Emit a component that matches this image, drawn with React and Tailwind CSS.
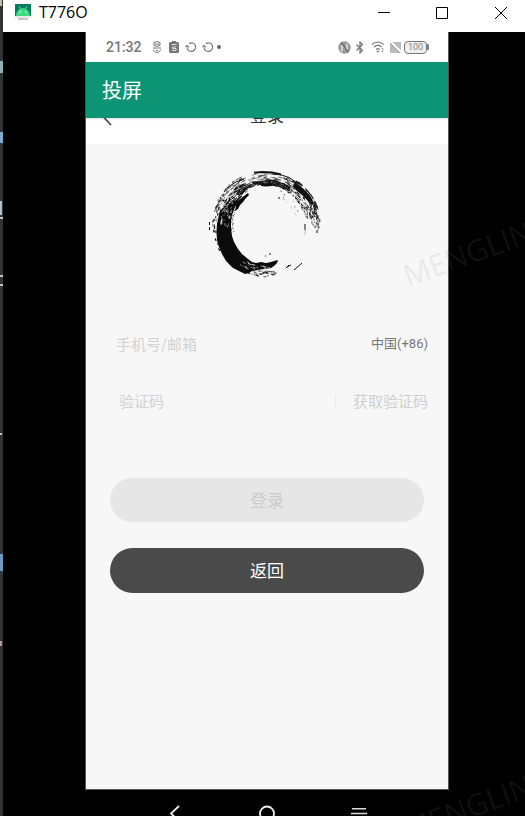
import React from "react";

const CJK = "font-['Noto_Sans_CJK_SC','Noto_Sans',sans-serif]";

function createRandom(seed) {
  let s = seed;
  return () => {
    s = (s * 16807) % 2147483647;
    return s / 2147483647;
  };
}

function arc(r, from, to) {
  const point = (deg) => {
    const a = (deg * Math.PI) / 180;
    return `${(59.5 + r * Math.cos(a)).toFixed(1)} ${(57 + r * Math.sin(a)).toFixed(1)}`;
  };
  return `M${point(from)}A${r.toFixed(1)} ${r.toFixed(1)} 0 0 1 ${point(to)}`;
}

const ink = "#111";
const paper = "#f7f7f7";

// Each band of bristle marks: from and to angle, inner and outer radius,
// number of marks, longest mark in degrees, stroke width, colour.
const bands = [
  [196, 240, 38, 48, 120, 5, 1.1, ink],
  [225, 300, 40, 45, 130, 10, 0.9, ink],
  [210, 300, 45, 52, 95, 7, 0.6, ink],
  [205, 240, 51, 55, 30, 3, 0.7, ink],
  [290, 350, 39, 52, 150, 4, 0.9, ink],
  [300, 340, 47, 54, 50, 8, 1.1, ink],
  [335, 361, 45, 54, 50, 3, 0.8, ink],
  [78, 150, 46, 52, 110, 3, 0.9, ink],
  [150, 215, 49, 54, 70, 2, 1, ink],
  [168, 225, 33, 38, 45, 1.5, 0.8, ink],
  [292, 340, 30, 37, 10, 2, 0.7, ink],
  [78, 122, 41, 49, 36, 4, 0.6, paper],
  [176, 225, 37, 50, 60, 4, 0.7, paper],
];

function buildMarks() {
  const random = createRandom(4217);
  const marks = [];
  bands.forEach(([from, to, inner, outer, count, length, width, color]) => {
    for (let i = 0; i < count; i++) {
      const r = inner + random() * (outer - inner);
      const start = from + random() * (to - from);
      const end = Math.min(to + 3, start + 1 + random() * length);
      marks.push({ d: arc(r, start, end), width: width * (0.5 + random() * 0.7), color });
    }
  });
  return marks;
}

const marks = buildMarks();

function InkCircle() {
  return (
    <svg viewBox="0 0 120 114" className="h-[114px] w-[120px]" fill="none" stroke={ink} role="img" aria-label="logo">
      <path
        fill="#0b0b0b"
        stroke="none"
        d="M13 42l-1.500 7-1.500 7-.5 8 .5 8 2 7 3 7 4 7 7 7 6 3 6 3 4-1 3-2 6-1 7-1 6-1 3-2 3-3 1-3-4 1-3 1-5 1-5-1-5 1-4-1-4-3-6-5-4-5-4-7-2-6-1-8 0-6 1-7 3-8 4-6-3-3-6 5-4 4z"
      />
      <path fill="#0b0b0b" stroke="none" d="M41 25l-4 3-5 4-3 5-1 6 3-2 2-4 3-3 3-4 3-3z" />
      <path fill={ink} stroke="none" d="M87 15l6 3 6 5 5 7 1 4-5-2-5-5-5-4-4-4z" />
      <path strokeWidth="3" d="M54 16.500l5 .5 6-.5" />
      <path strokeWidth="2" d="M47 4.800l8-.8 10 .4 9 2" />
      <path strokeWidth="1" d="M73 6.500l9 3 6 4M17 24l4-5 8-5 8-3M79 100l3-3M87 102l8-7M84 97l-4 2M62 86h2M58 88h1M110 62v3M98 56v6M2.500 54v3M2.500 59v3M71 30h2" />
      <path strokeWidth=".5" stroke="#888" d="M98 62v5M111 53v12" />
      {marks.map((mark, i) => (
        <path key={i} d={mark.d} strokeWidth={mark.width} stroke={mark.color} />
      ))}
    </svg>
  );
}

function AndroidLogo() {
  return (
    <svg viewBox="0 0 16 16" className="h-4 w-4" aria-hidden="true">
      <path fill="#087a62" d="M0 0h16v12H0z" />
      <path fill="#3ddc84" d="M1 12c.3-4 2-6 4-7L3.500 2.500l.8-.4L6 4.500c1.300-.4 2.700-.4 4 0l1.700-2.400.8.4L11 5c2 1 3.700 3 4 7z" />
      <path fill="#fff" d="M4.500 7.500h1.200v1.200H4.500zM10.300 7.500h1.200v1.200h-1.200z" />
      <path fill="#e8e8e8" d="M0 12h16v2H0z" />
      <path fill="#c4c4c4" d="M3 14h10v2H3z" />
    </svg>
  );
}

function TitleBar() {
  return (
    <header className="flex h-8 shrink-0 items-center bg-white pl-3 text-black">
      <div className="pb-2">
        <AndroidLogo />
      </div>
      <h1 className="ml-2 pb-2 font-['Open_Sans',sans-serif] text-base leading-5">T776O</h1>
      <div className="ml-auto flex h-8 items-start pt-[7px]">
        <button type="button" aria-label="Minimize" className="mr-[46px]">
          <svg viewBox="0 0 12 12" className="h-3 w-3" stroke="#000"><path d="M0 5.500h12" /></svg>
        </button>
        <button type="button" aria-label="Maximize" className="mr-[47px]">
          <svg viewBox="0 0 12 12" className="h-3 w-3" stroke="#000" fill="none"><path d="M.5.5h11v11H.5z" /></svg>
        </button>
        <button type="button" aria-label="Close" className="mr-[18px]">
          <svg viewBox="0 0 12 12" className="h-3 w-3" stroke="#000"><path d="M0 0l12 12M12 0L0 12" /></svg>
        </button>
      </div>
    </header>
  );
}

function StatusBar() {
  return (
    <div className="flex h-[30px] shrink-0 items-center bg-white pl-5 pr-[19px] text-[#777]">
      <span className="font-[Roboto,sans-serif] text-sm font-medium leading-5">21:32</span>
      <div className="ml-[9px] flex items-center gap-[5px]" aria-hidden="true">
        <svg viewBox="0 0 12 12" className="h-3 w-3" fill="none" stroke="currentColor">
          <path d="M3 1.500Q6-.5 9 1.500v3Q6 6 3 4.500zM2 7h8M2.500 8.500c.5 4 6.500 4 7 0M3.500 3h5M5 9.500h2" />
        </svg>
        <svg viewBox="0 0 12 12" className="h-3 w-3">
          <rect x="1" y="1" width="10" height="11" rx="1.500" fill="#777" />
          <path d="M4 0h4v2H4z" fill="#777" />
          <path d="M3.500 3.500h5M8 6H4.500v1.500H8v2H4" stroke="#ddd" fill="none" />
        </svg>
        {[0, 1].map((n) => (
          <svg key={n} viewBox="0 0 12 12" className="h-3 w-3" fill="none" stroke="currentColor" strokeWidth="1.200">
            <path d="M4 2.500A4.300 4.300 0 1 1 2 6.500M.5 6L2 4.500 4 6.200M4 2.500h2" />
          </svg>
        ))}
        <span className="-ml-0.5 h-1 w-1 rounded-full bg-[#666]" />
      </div>
      <div className="ml-auto flex items-center" aria-hidden="true">
        <svg viewBox="0 0 13 13" className="mr-1 h-[13px] w-[13px]">
          <circle cx="6.500" cy="6.500" r="6.200" fill="#999" />
          <path d="M4 10.500V4l5 5V2.500" stroke="#f3f3f3" strokeWidth="1.200" fill="none" />
          <path d="M3 1.500l7.500 10" stroke="#666" strokeWidth="1.300" />
        </svg>
        <svg viewBox="0 0 10 13" className="mr-1.5 h-[13px] w-2.5" fill="none" stroke="#777" strokeWidth="1.300">
          <path d="M1.500 3.500l6 6L5 12V1l2.500 2.500-6 6" />
        </svg>
        <svg viewBox="0 0 14 12" className="mr-[5px] h-3 w-3.5" fill="none" stroke="#888" strokeWidth="1.400">
          <path d="M.8 3.500c3.500-3.200 8.500-3.200 12 0M3 6c2.300-2 5.500-2 7.700 0M5 8.500c1-1 2.700-1 3.600 0M5.500 10.500h2.500M11.500 7v1.500M11.500 9.500V11" />
        </svg>
        <svg viewBox="0 0 11 12" className="mr-[3px] h-3 w-[11px]">
          <path d="M0 1h11v11H0z" fill="#bbb" />
          <path d="M0 0l11 11" stroke="#fff" strokeWidth="2" />
          <path d="M0 2l10 10" stroke="#999" />
        </svg>
        <span className="flex h-[13px] w-[23px] items-center justify-center rounded-sm border border-[#777] bg-[#eee] font-[Roboto,sans-serif] text-[9px] leading-none text-[#888]">100</span>
        <span className="h-1.5 w-0.5 bg-[#888]" />
      </div>
    </div>
  );
}

function LoginForm() {
  return (
    <form className="flex flex-col" onSubmit={(e) => e.preventDefault()}>
      <div className="mt-[46px] flex h-8 items-center pl-[30px] pr-5">
        <input
          type="text"
          aria-label="手机号/邮箱"
          placeholder="手机号/邮箱"
          className="min-w-0 flex-1 bg-transparent text-[15px] leading-6 outline-none placeholder:text-[#d2d2d2]"
        />
        <button type="button" className="font-[Roboto,'Noto_Sans_CJK_SC',sans-serif] text-[13px] leading-6 text-[#777]">中国(+86)</button>
      </div>
      <div className="mt-[25px] flex h-8 items-center pl-[33px] pr-5">
        <input
          type="text"
          aria-label="验证码"
          placeholder="验证码"
          className="min-w-0 flex-1 bg-transparent text-[15px] leading-6 outline-none placeholder:text-[#d2d2d2]"
        />
        <button type="button" className="flex items-center text-[15px] leading-6 text-[#cfcfcf]">
          <span className="mr-[17px] h-[17px] w-px bg-[#ececec]" />
          获取验证码
        </button>
      </div>
      <div className="mt-[61px] flex flex-col gap-[26px] px-6 text-[17px] leading-6">
        <button type="submit" disabled className="h-11 rounded-full bg-[#e6e6e6] pb-px text-[#cbcbcb]">登录</button>
        <button type="button" className="h-[45px] rounded-full bg-[#4a4a4a] pb-px text-white">返回</button>
      </div>
    </form>
  );
}

function Phone() {
  return (
    <main className={`flex min-h-0 flex-1 flex-col border-x border-b border-[#555] bg-[#f7f7f7] ${CJK}`}>
      <StatusBar />
      <div className="relative z-10 flex h-14 shrink-0 items-center bg-[#0c9475] pl-4 text-xl text-white shadow-sm">投屏</div>
      <div className="-mt-7 flex h-[54px] shrink-0 items-center justify-center bg-white pl-4 text-[17px] leading-6 text-[#333]">
        <button type="button" aria-label="返回">
          <svg viewBox="0 0 10 18" className="h-[18px] w-2.5" fill="none" stroke="#444" strokeWidth="1.700"><path d="M9 1L1.500 9 9 17" /></svg>
        </button>
        <h2 className="flex-1 pb-1 pr-[26px] text-center">登录</h2>
      </div>
      <div className="mt-6 flex justify-center pr-px">
        <InkCircle />
      </div>
      <LoginForm />
    </main>
  );
}

function NavBar() {
  return (
    <nav className="flex h-[26px] shrink-0 items-start justify-center gap-[76px] overflow-hidden pt-[15px]">
      <button type="button" aria-label="Back">
        <svg viewBox="0 0 16 16" className="h-4 w-4" fill="none" stroke="#eee" strokeWidth="1.800"><path d="M12 1L4 8.500 12 16" /></svg>
      </button>
      <button type="button" aria-label="Home">
        <svg viewBox="0 0 16 16" className="h-4 w-4" fill="none" stroke="#eee" strokeWidth="1.800"><circle cx="8" cy="8.500" r="7" /></svg>
      </button>
      <button type="button" aria-label="Menu">
        <svg viewBox="0 0 16 16" className="h-4 w-4" stroke="#ddd" strokeWidth="1.500"><path d="M1 3.800h14M0 8.500h16M1 13h14" /></svg>
      </button>
    </nav>
  );
}

function BackgroundEdge() {
  return (
    <div className="flex w-[3px] shrink-0 flex-col bg-[#2f3438]" aria-hidden="true">
      <span className="h-1.5 w-0.5 bg-[#c6b9a5]" />
      <span className="mt-[55px] h-3 bg-[#8fb0b5]" />
      <span className="mt-[59px] h-[11px] bg-[#79aed0]" />
      <span className="mt-[58px] h-3.5 w-0.5 bg-[#aebfc5]" />
      <span className="mt-0.5 h-0.5 bg-[#c4c4c4]" />
      <span className="mt-14 h-0.5 bg-[#c4c4c4]" />
      <span className="mt-[7px] h-0.5 bg-[#c4c4c4]" />
      <span className="mt-[147px] h-0.5 w-0.5 bg-[#c4c4c4]" />
      <span className="mt-[119px] h-[17px] bg-[#6b9dc2]" />
      <span className="mt-[70px] h-[5px] w-0.5 bg-[#b59c8d]" />
    </div>
  );
}

const watermark =
  "pointer-events-none absolute left-[408px] z-20 origin-bottom-left -rotate-20 font-['Open_Sans',sans-serif] text-[30px] leading-[22px] text-[#808080]/12";

export default function App() {
  return (
    <div className="relative flex h-screen overflow-hidden bg-black">
      <BackgroundEdge />
      <div className="flex min-w-0 flex-1 flex-col">
        <TitleBar />
        <div className="flex min-h-0 flex-1 flex-col pl-[82px] pr-[76px]">
          <Phone />
          <NavBar />
        </div>
      </div>
      <span className={`${watermark} top-[265px]`} aria-hidden="true">MENGLIN</span>
      <span className={`${watermark} top-[819px]`} aria-hidden="true">MENGLIN</span>
    </div>
  );
}
